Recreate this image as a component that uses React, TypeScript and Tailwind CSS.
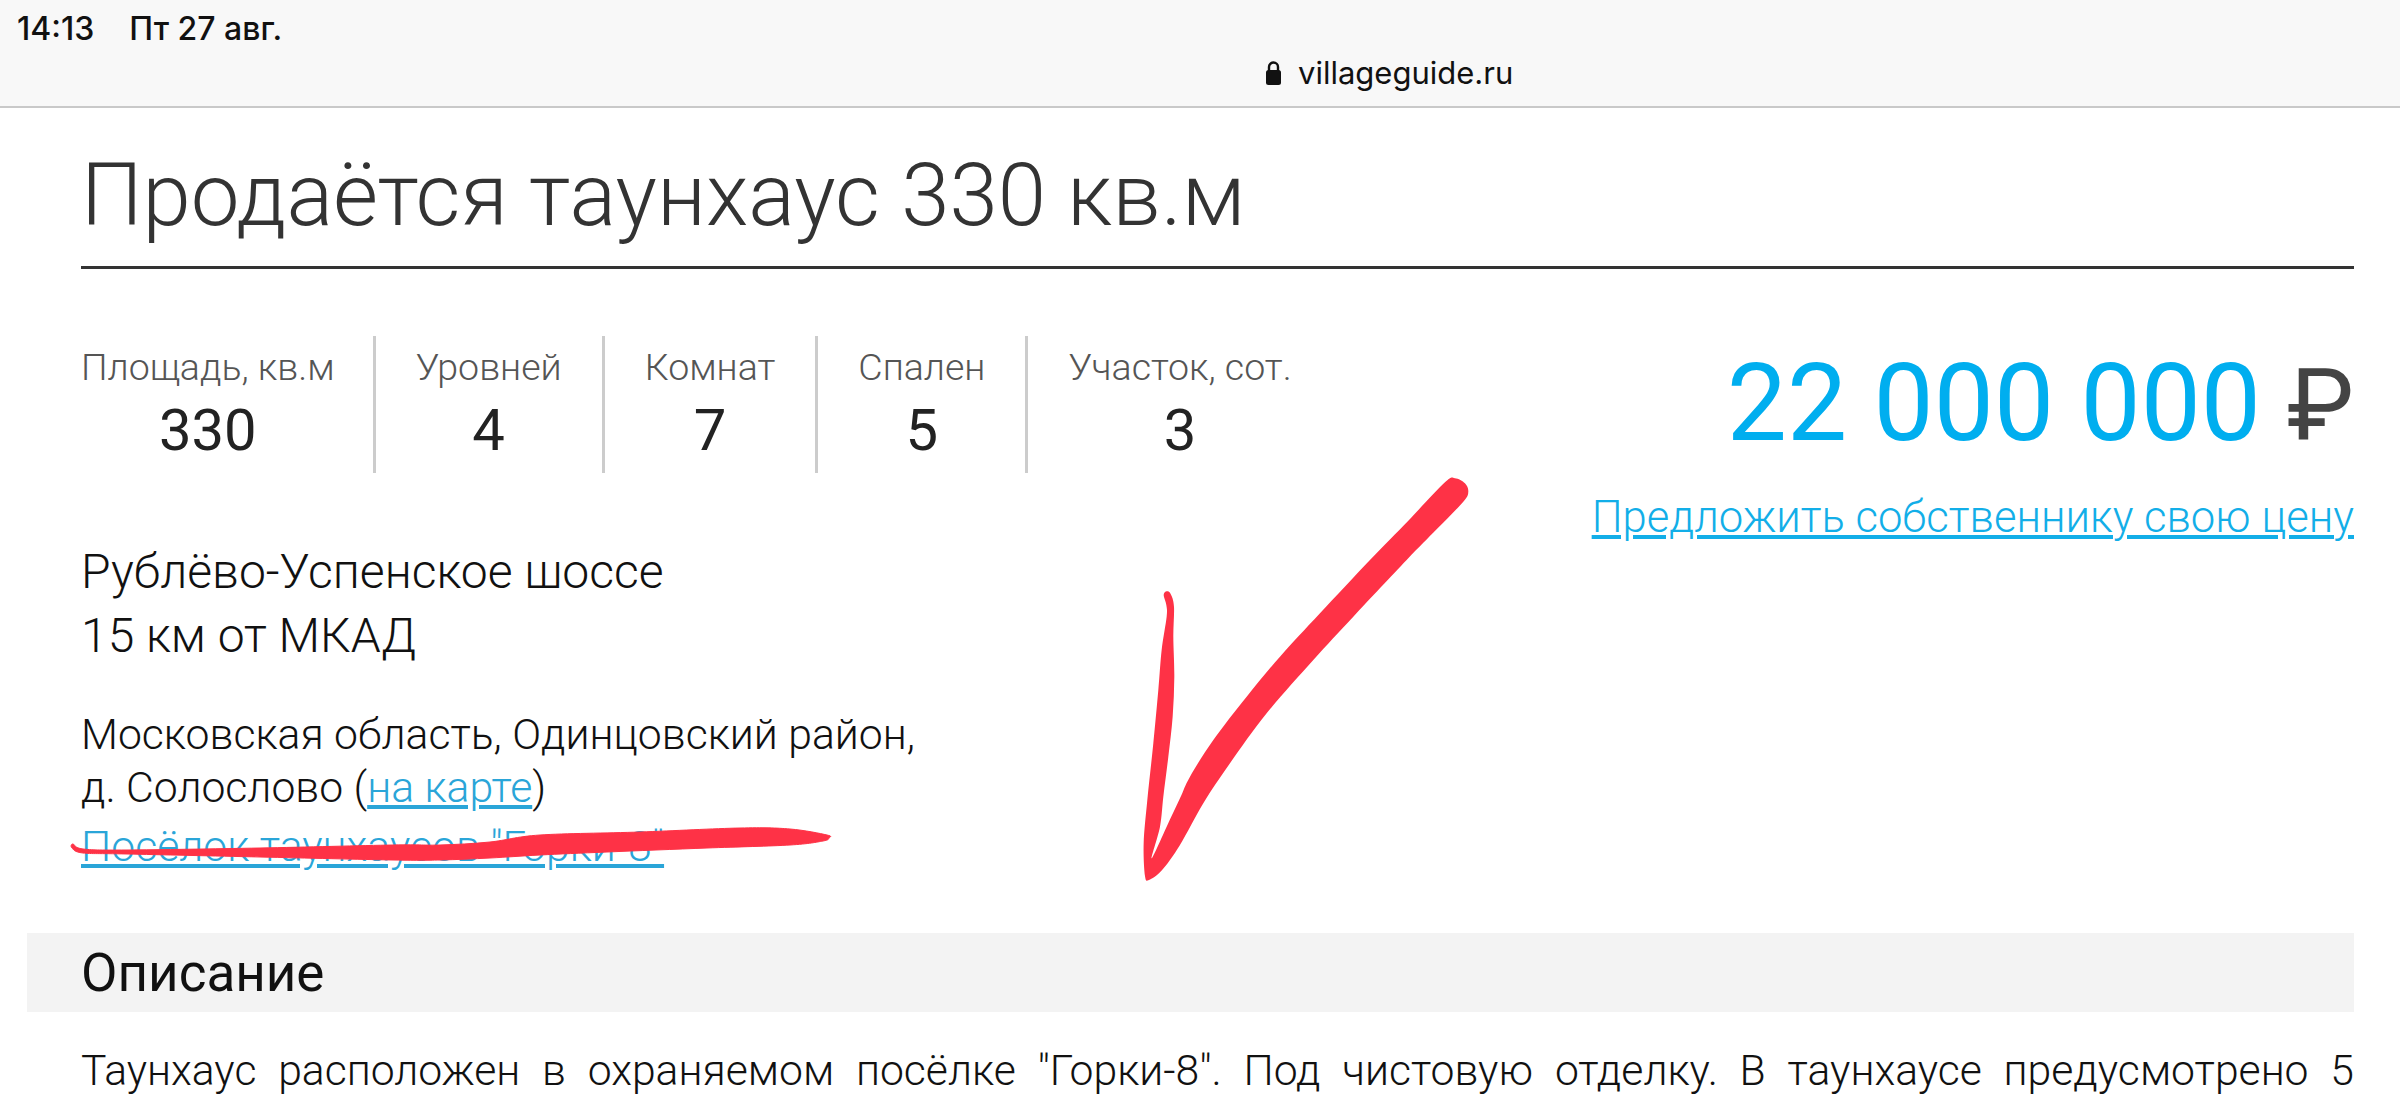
const stats = [
  { label: 'Площадь, кв.м', value: '330' },
  { label: 'Уровней', value: '4' },
  { label: 'Комнат', value: '7' },
  { label: 'Спален', value: '5' },
  { label: 'Участок, сот.', value: '3' },
];

type Pt = [number, number];

// замкнутая сглаженная линия через точки (Catmull-Rom)
const smoothPath = (pts: Pt[]) => {
  const n = pts.length;
  let d = `M${pts[0][0]} ${pts[0][1]}`;
  for (let i = 0; i < n; i++) {
    const p0 = pts[(i - 1 + n) % n];
    const p1 = pts[i];
    const p2 = pts[(i + 1) % n];
    const p3 = pts[(i + 2) % n];
    const c1x = p1[0] + (p2[0] - p0[0]) / 6;
    const c1y = p1[1] + (p2[1] - p0[1]) / 6;
    const c2x = p2[0] - (p3[0] - p1[0]) / 6;
    const c2y = p2[1] - (p3[1] - p1[1]) / 6;
    d += `C${c1x} ${c1y} ${c2x} ${c2y} ${p2[0]} ${p2[1]}`;
  }
  return d + 'Z';
};

const arrowPoints: Pt[] = [
  [350, 424], [362, 432], [372, 470], [370, 560], [373, 680], [368, 800], [355, 920], [340, 1040], [330, 1130],
  [305, 1225], [350, 1130], [390, 1045], [420, 980], [490, 870], [590, 740], [690, 620], [810, 490], [960, 330],
  [1075, 212], [1185, 97], [1215, 85], [1245, 100], [1255, 125], [1240, 155], [1160, 238], [1070, 330], [910, 500],
  [790, 630], [650, 790], [540, 940], [460, 1060], [390, 1185], [335, 1262], [297, 1290],
  [285, 1278], [281, 1180], [292, 1050], [310, 880], [325, 720], [335, 600], [350, 500], [349, 465], [341, 435],
];

const strikePoints: Pt[] = [
  [73, 844], [83, 849], [127, 850], [260, 848], [393, 845], [440, 845], [490, 842], [540, 835], [640, 832], [740, 828],
  [790, 829], [827, 835], [829, 838], [823, 841], [790, 845], [707, 848], [607, 852], [540, 855], [490, 858], [440, 860],
  [393, 860], [260, 857], [127, 854], [83, 853], [72, 848],
];

const App = () => {
  return (
    <div className="relative h-[1098px] w-[2400px] overflow-hidden bg-white [font-family:Roboto,sans-serif]">
      {/* Браузерная панель */}
      <div className="h-[108px] border-b-2 border-[#c9c9c9] bg-[#f8f8f8] [font-family:Inter,sans-serif] text-[#111]">
        <div className="flex gap-[35px] pl-[17px] pt-[10px] text-[32px] font-medium leading-[38px]">
          <span>14:13</span>
          <span>Пт 27 авг.</span>
        </div>
        <div className="flex items-center gap-[16px] pl-[1265px] pt-[6px] text-[31px] leading-[38px]">
          <svg width="17" height="26" viewBox="0 0 17 26" fill="#111">
            <path d="M4 11V7a4.5 4.5 0 0 1 9 0v4" fill="none" stroke="#111" strokeWidth="2.4" />
            <rect x="1" y="10" width="15" height="15" rx="2.5" />
          </svg>
          <span>villageguide.ru</span>
        </div>
      </div>

      <main className="pl-[81px] pr-[46px]">
        <div className="border-b-[3px] border-[#333] pb-[20px] pt-[36px]">
          <h1 className="text-[87px] font-light leading-[102px] text-[#333]">Продаётся таунхаус 330 кв.м</h1>
        </div>

        <div className="mt-[67px] flex justify-between">
          <div>
            <div className="flex h-[137px]">
              {stats.map((s, i) => (
                <div
                  key={s.label}
                  className={`flex flex-col items-center border-[#ccc] ${i === 0 ? 'pr-[38px]' : 'px-[40px]'} ${i < stats.length - 1 ? 'border-r-[3px]' : ''}`}
                >
                  <div className="pt-[9px] text-[37.5px] font-light leading-[44px] text-[#555]">{s.label}</div>
                  <div className="mt-[8px] text-[58px] leading-[66px] text-[#222]">{s.value}</div>
                </div>
              ))}
            </div>

            <div className="mt-[67px] text-[48px] font-light leading-[64px] text-[#111]">
              <div>Рублёво-Успенское шоссе</div>
              <div>15 км от МКАД</div>
            </div>

            <div className="mt-[40px] text-[42.7px] font-light leading-[53px] text-[#111]">
              <div>Московская область, Одинцовский район,</div>
              <div>
                д. Солослово (<a className="text-[#2aa5d8] underline">на карте</a>)
              </div>
              <div className="mt-[3px] leading-[58px]">
                <a className="text-[#2aa5d8] underline">Посёлок таунхаусов "Горки-8"</a>
              </div>
            </div>
          </div>

          <div className="flex flex-col items-end">
            <div className="flex items-baseline gap-[26px] pt-[5px] leading-[126px]">
              <span className="text-[107px] text-[#00aeef]">22 000 000</span>
              <span className="text-[101px] text-[#444]">₽</span>
            </div>
            <a className="mt-[24px] text-[43.6px] font-light leading-[50px] text-[#12aee8] underline">
              Предложить собственнику свою цену
            </a>
          </div>
        </div>

        <div className="-ml-[54px] mt-[58px] flex h-[79px] items-center bg-[#f3f3f3] pl-[54px]">
          <h2 className="text-[53px] leading-[56px] text-[#111]">Описание</h2>
        </div>

        <p className="mt-[29px] text-justify text-[42.7px] font-light leading-[58px] text-[#111] [text-align-last:justify]">
          Таунхаус расположен в охраняемом посёлке "Горки-8". Под чистовую отделку. В таунхаусе предусмотрено 5
        </p>
      </main>

      {/* Пометки красным маркером поверх страницы */}
      <svg className="absolute inset-0" width="2400" height="1098" viewBox="0 0 2400 1098">
        <path d={smoothPath(arrowPoints)} transform="translate(1050 450) scale(0.3333)" fill="#fe3246" />
        <path d={smoothPath(strikePoints)} fill="#fe3246" stroke="#fe3246" strokeWidth="1" />
      </svg>
    </div>
  );
};

export default App;
